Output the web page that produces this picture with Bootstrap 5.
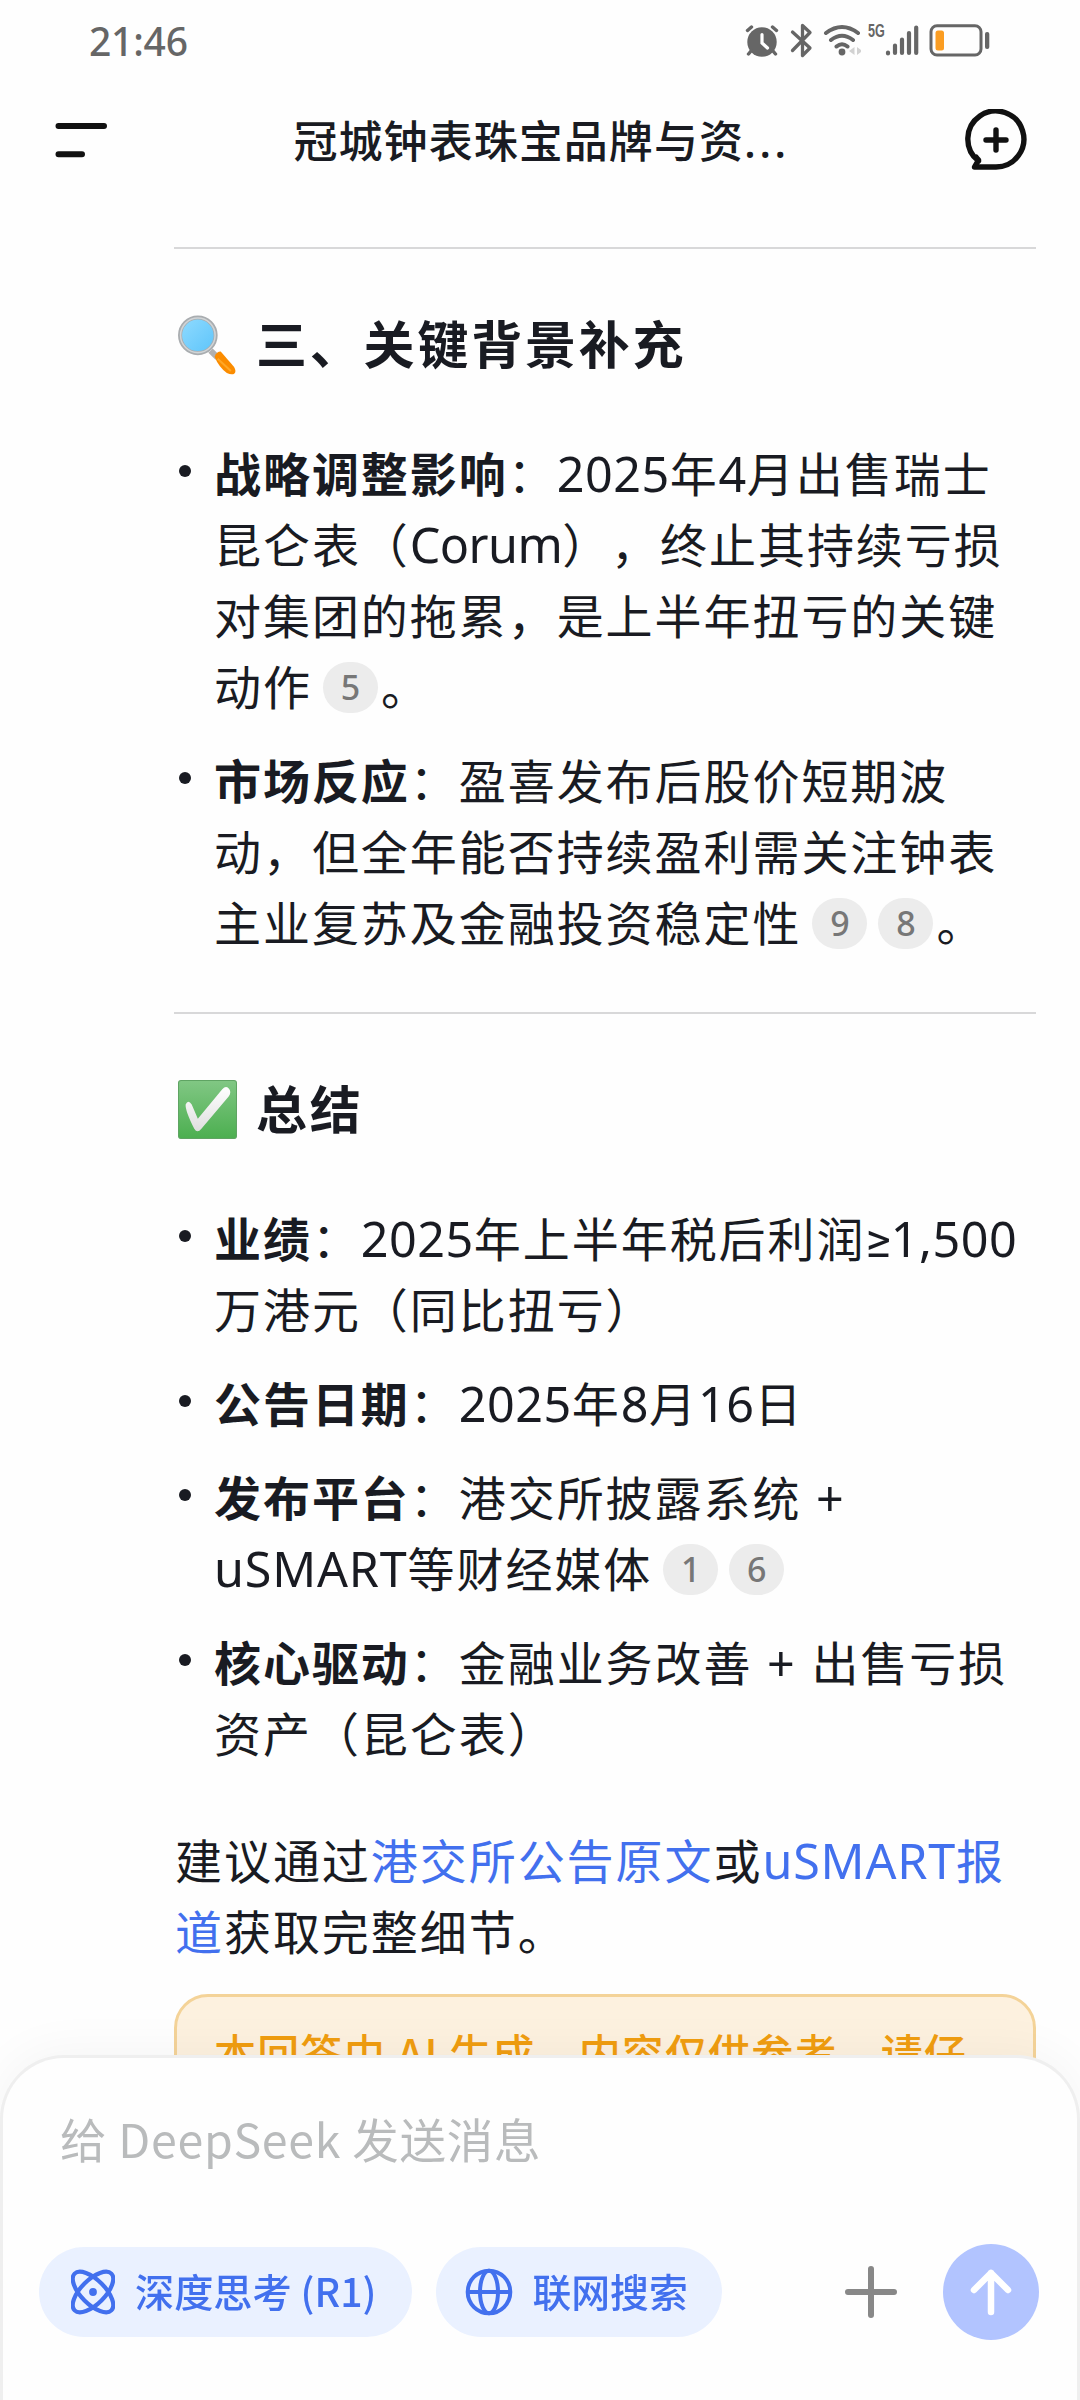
<!DOCTYPE html>
<html lang="zh-CN">
<head>
<meta charset="utf-8">
<meta name="viewport" content="width=device-width, initial-scale=1">
<title>DeepSeek</title>
<link href="https://cdn.jsdelivr.net/npm/bootstrap@5.3.0/dist/css/bootstrap.min.css" rel="stylesheet">
<style>
body{font-family:"Noto Sans CJK SC","Noto Sans",sans-serif;color:#191b22;background:#fefefe;height:2400px;overflow:hidden;text-spacing-trim:space-all}
svg{display:block;flex:none}
.latin{font-family:"Noto Sans",Roboto,"Noto Sans CJK SC",sans-serif;letter-spacing:.5px;font-size:48.5px;line-height:1}
.latin.tight{letter-spacing:-.6px}
.latin.wide{letter-spacing:.8px}
.latin.plus{letter-spacing:2px}
.geq{font-family:Roboto,sans-serif;letter-spacing:0}
.statusbar{height:80px;padding:0 89px 0 89px;color:#666}
.clock{font:500 39px/81px "Noto Sans",sans-serif;letter-spacing:-.2px}
.net5g{font:700 18px/18px "Liberation Sans",sans-serif;transform:scaleX(.7);transform-origin:0 0;width:17px;margin:-19px 0 0 7px}
.gap-bt{margin-left:10px}
.gap-bat{margin-left:9px}
.topbar{height:120px;padding:0 53px 0 55px}
.topbar h1{font-size:44px;line-height:64px;letter-spacing:1.05px;font-weight:500;white-space:nowrap;margin:0 0 1px 9px}
.dots{letter-spacing:3.2px;font-family:"Noto Sans"}
.answer{margin:0 44px 0 174px;padding-top:47px}
.rule{height:2px;background:#d8d8d9}
.points+.rule{margin-top:56px}
.heading{font-size:51px;letter-spacing:2.8px;line-height:72px;font-weight:700;white-space:nowrap;padding-left:4px;gap:19px;margin:57px 0 58px}
.heading svg{margin-top:4px}
.points{font-size:47px;letter-spacing:1.95px;line-height:71px;white-space:nowrap;gap:23px;padding-left:40px}
.points li{position:relative}
.points li::before{content:"";position:absolute;left:-35px;top:29px;width:12px;height:12px;border-radius:50%;background:#191b22}
.points b{font-weight:700}
.cite{display:inline-flex;align-items:center;justify-content:center;width:55px;height:51px;border-radius:28px;background:#ececec;color:#777;font:500 34px/1 "Noto Sans",sans-serif;letter-spacing:0;vertical-align:5px;margin-left:11px}
.cite.end{margin-right:3px}
.advice{font-size:47px;letter-spacing:1.95px;line-height:71px;white-space:nowrap;margin:56px 0 29px 1px}
.advice a{color:#4270ee;text-decoration:none}
.notice{border:3px solid #f4d398;border-radius:34px;background:#fdf1df;color:#f09d10;height:180px;padding:25px 37px;font-size:42px;font-weight:500;line-height:60px;letter-spacing:1.15px;white-space:nowrap}
.composer{height:345px;border:3px solid #efefef;border-bottom:0;border-radius:64px 64px 0 0;background:#fefefe;box-shadow:0 -4px 50px rgba(0,0,0,.045);padding:44px 38px 0 36px}
.prompt{font-size:46.5px;line-height:72px;color:#b9bbbc;margin-left:21px;letter-spacing:.7px}
.actions{margin-top:70px}
.tool{height:90px;border-radius:45px;background:#eaf1ff;color:#4270ee;font-size:39.2px;font-weight:500;padding:0 35px 0 32px;gap:20px;white-space:nowrap;border:0}
.tool span{margin-top:-4px}
.tool.search{margin-left:24px;padding:0 34px 0 29px;font-size:38.8px}
.send{width:96px;height:96px;border-radius:50%;background:#b2c4ff;margin-left:45px}
</style>
<script src="https://cdn.jsdelivr.net/npm/bootstrap@5.3.0/dist/js/bootstrap.bundle.min.js"></script>
</head>
<body>
<header>
  <div class="statusbar d-flex justify-content-between">
    <div class="clock">21:46</div>
    <div class="d-flex align-items-center">
      <svg width="34" height="34" viewBox="746 22 34 34"><circle cx="763" cy="41" r="14.7" fill="#666"/><path d="M748.5 29.5l4-3.5M777.500 29.500l-4-3.500M752 50l-2.500 3M774 50l2.500 3" stroke="#666" stroke-width="3.400" stroke-linecap="round"/><path d="M763 33.500v8.500l5.500 5" stroke="#fff" stroke-width="3.200" fill="none" stroke-linecap="round"/></svg>
      <svg class="gap-bt" width="26" height="36" viewBox="789 21 26 36"><path d="M792.500 31l17.500 16-7.500 7.500V24.500l7.500 7L792.500 49.500" stroke="#666" stroke-width="3.300" fill="none" stroke-linejoin="round" stroke-linecap="round"/></svg>
      <svg class="ms-2" width="38" height="34" viewBox="821 22 38 34"><path d="M824 32q16-12 32 0M829 39q11-8.500 22 0M834.500 45.500q5.500-4.500 11 0" stroke="#666" stroke-width="4" fill="none" stroke-linecap="round"/><circle cx="840" cy="51" r="3.400" fill="#666"/><path d="M852.500 46v8l-5.500-4zM855 46v8l5.500-4z" fill="#d2d2d2"/></svg>
      <span class="net5g">5G</span>
      <svg width="34" height="34" viewBox="884 22 34 34"><path d="M887 52.500v-1M894 52v-7.500M901 52V38.500M908 52V32M915.200 52V26.500" stroke="#666" stroke-width="4.200" stroke-linecap="round"/></svg>
      <svg class="gap-bat" width="63" height="36" viewBox="928 21 63 36"><rect x="931" y="24.700" width="50" height="29.300" rx="6" fill="none" stroke="#666" stroke-width="3"/><rect x="935.500" y="29.500" width="8.500" height="20" rx="2.500" fill="#fb9d22"/><rect x="985" y="31" width="4.300" height="17" rx="2" fill="#666"/></svg>
    </div>
  </div>
  <div class="topbar d-flex align-items-center justify-content-between">
    <svg width="54" height="40" viewBox="55 120 54 40"><path d="M58.500 126h45.500M58.500 154.200h23.500" stroke="#111" stroke-width="6" stroke-linecap="round"/></svg>
    <h1>冠城钟表珠宝品牌与资<span class="dots">...</span></h1>
    <svg width="62" height="62" viewBox="965 109 62 62"><path d="M978.500 161a28 28 0 1 1 17.500 6H974.500l4-7q-1.500-1.500-2.500-3" fill="none" stroke="#111" stroke-width="5.400" stroke-linejoin="round" stroke-linecap="round"/><path d="M996 130v20M986 140h20" stroke="#111" stroke-width="5.400" stroke-linecap="round"/></svg>
  </div>
</header>
<main class="answer">
  <div class="rule"></div>
  <h2 class="heading d-flex align-items-center">
    <svg width="59" height="61" viewBox="0 0 58 60"><defs><linearGradient id="lens" x1="0" y1="0" x2="1" y2="1"><stop stop-color="#91dbff"/><stop offset="1" stop-color="#5cc4fa"/></linearGradient></defs><path d="M32 36l7 7" stroke="#b0b0b0" stroke-width="6"/><path d="M36 42q2-5 6-5l13 15q3 5 0 7-3 1-7-1-8-6-12-16z" fill="#fb8c00"/><path d="M39 44l13 12" stroke="#ffa726" stroke-width="2"/><circle cx="19.500" cy="21" r="17.500" fill="url(#lens)" stroke="#a9adb0" stroke-width="4"/><circle cx="19.500" cy="21" r="17" fill="none" stroke="#d0d4d6" stroke-width="1.500"/></svg>
    <span>三、关键背景补充</span>
  </h2>
  <ul class="points list-unstyled d-flex flex-column m-0">
    <li><b>战略调整影响</b>：<span class="latin">2025</span>年<span class="latin">4</span>月出售瑞士<br>昆仑表（<span class="latin tight">Corum</span>），终止其持续亏损<br>对集团的拖累，是上半年扭亏的关键<br>动作<span class="cite end">5</span>。</li>
    <li><b>市场反应</b>：盈喜发布后股价短期波<br>动，但全年能否持续盈利需关注钟表<br>主业复苏及金融投资稳定性<span class="cite">9</span><span class="cite end">8</span>。</li>
  </ul>
  <div class="rule"></div>
  <h2 class="heading d-flex align-items-center">
    <svg width="59" height="59" viewBox="0 0 58 58"><defs><linearGradient id="tile" x1="0" y1="0" x2="0" y2="1"><stop stop-color="#81c784"/><stop offset="1" stop-color="#4caf50"/></linearGradient><linearGradient id="tick" x1="0" y1="0" x2="0" y2="1"><stop stop-color="#fff"/><stop offset="1" stop-color="#dedede"/></linearGradient></defs><rect x=".5" y=".5" width="57" height="57" rx="2.500" fill="url(#tile)" stroke="#5fa463"/><path d="M7.500 24q2.500-5 6 0l6 14L43.500 9q4-4 7 0 2 3-.5 7L23 48q-4 5-7 0Q7 30 7.500 24z" fill="url(#tick)"/></svg>
    <span>总结</span>
  </h2>
  <ul class="points list-unstyled d-flex flex-column m-0">
    <li><b>业绩</b>：<span class="latin">2025</span>年上半年税后利润<span class="latin"><span class="geq">≥</span>1,500</span><br>万港元（同比扭亏）</li>
    <li><b>公告日期</b>：<span class="latin">2025</span>年<span class="latin">8</span>月<span class="latin">16</span>日</li>
    <li><b>发布平台</b>：港交所披露系统<span class="latin plus"> +</span><br><span class="latin wide">uSMART</span>等财经媒体<span class="cite">1</span><span class="cite">6</span></li>
    <li><b>核心驱动</b>：金融业务改善<span class="latin plus"> + </span>出售亏损<br>资产（昆仑表）</li>
  </ul>
  <p class="advice">建议通过<a href="#">港交所公告原文</a>或<a href="#"><span class="latin wide">uSMART</span>报<br>道</a>获取完整细节。</p>
  <div class="notice">本回答由 AI 生成，内容仅供参考，请仔<br>细甄别。</div>
</main>
<footer class="composer fixed-bottom">
  <div class="prompt">给 DeepSeek 发送消息</div>
  <div class="actions d-flex align-items-center">
    <button class="tool d-flex align-items-center"><svg width="44" height="46" viewBox="-22 -23 44 46"><g fill="none" stroke="#4270ee" stroke-width="4.200"><ellipse rx="26" ry="12" transform="rotate(45)"/><ellipse rx="26" ry="12" transform="rotate(-45)"/></g><circle r="3.900" fill="#4270ee"/></svg><span>深度思考 (R1)</span></button>
    <button class="tool search d-flex align-items-center"><svg width="48" height="48" viewBox="-24 -24 48 48"><g fill="none" stroke="#4270ee" stroke-width="4"><circle r="21.300"/><ellipse rx="9" ry="21.300"/><path d="M-21 0H21"/></g></svg><span>联网搜索</span></button>
    <svg class="ms-auto" width="54" height="54" viewBox="-27 -27 54 54"><path d="M-23 0H23M0-23V23" stroke="#888" stroke-width="6" stroke-linecap="round"/></svg>
    <div class="send d-flex align-items-center justify-content-center"><svg width="48" height="50" viewBox="-24 -25 48 50"><path d="M0 20V-19M-17-2L0-19 17-2" fill="none" stroke="#fff" stroke-width="6.500" stroke-linecap="round" stroke-linejoin="round"/></svg></div>
  </div>
</footer>
</body>
</html>
